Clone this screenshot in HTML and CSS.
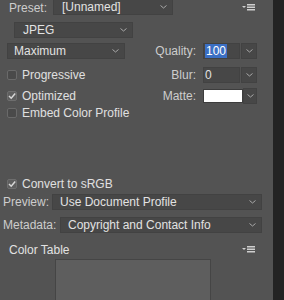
FILE: index.html
```html
<!DOCTYPE html>
<html lang="en">
<head>
    <meta charset="UTF-8">
    <title>Save for Web - Optimize</title>
    <link rel="stylesheet" href="styles.css">
</head>
<body>

    <div class="panel">

        <!-- Preset -->
        <div class="row preset-row">
            <span class="label preset-label">Preset:</span>
            <div class="select preset-select">
                <span>[Unnamed]</span>
                <svg class="chev" width="7" height="4" viewBox="0 0 7 4"><path d="M0.5 0.5 L3.5 3 L6.5 0.5" fill="none" stroke="#a8a8a8" stroke-width="1"/></svg>
            </div>
            <span class="menu-icon">
                <svg width="13" height="8" viewBox="0 0 13 8">
                    <path d="M0 2 L4 2 L2 4 Z" fill="#d0d0d0"/>
                    <rect x="5" y="0" width="8" height="1.5" fill="#cfcfcf"/>
                    <rect x="5" y="2.5" width="8" height="1.5" fill="#cfcfcf"/>
                    <rect x="5" y="5" width="8" height="1.5" fill="#cfcfcf"/>
                </svg>
            </span>
        </div>

        <!-- Format -->
        <div class="row format-row">
            <div class="select format-select">
                <span>JPEG</span>
                <svg class="chev" width="7" height="4" viewBox="0 0 7 4"><path d="M0.5 0.5 L3.5 3 L6.5 0.5" fill="none" stroke="#a8a8a8" stroke-width="1"/></svg>
            </div>
        </div>

        <!-- Options -->
        <div class="row opt-row first">
            <div class="select quality-select">
                <span>Maximum</span>
                <svg class="chev" width="7" height="4" viewBox="0 0 7 4"><path d="M0.5 0.5 L3.5 3 L6.5 0.5" fill="none" stroke="#a8a8a8" stroke-width="1"/></svg>
            </div>
            <div class="field">
                <span class="label">Quality:</span>
                <div class="num"><span class="sel">100</span></div>
                <div class="drop"><svg width="7" height="4" viewBox="0 0 7 4"><path d="M0.5 0.5 L3.5 3 L6.5 0.5" fill="none" stroke="#a8a8a8" stroke-width="1"/></svg></div>
            </div>
        </div>

        <div class="row opt-row blur-row">
            <label class="check"><span class="box"></span>Progressive</label>
            <div class="field">
                <span class="label">Blur:</span>
                <div class="num">0</div>
                <div class="drop"><svg width="7" height="4" viewBox="0 0 7 4"><path d="M0.5 0.5 L3.5 3 L6.5 0.5" fill="none" stroke="#a8a8a8" stroke-width="1"/></svg></div>
            </div>
        </div>

        <div class="row opt-row matte-row">
            <label class="check"><span class="box checked"><svg width="10" height="10" viewBox="0 0 10 10"><path d="M2 5 L4.2 7.2 L8.2 2.6" fill="none" stroke="#d8d8d8" stroke-width="1.5"/></svg></span>Optimized</label>
            <div class="field">
                <span class="label">Matte:</span>
                <div class="swatch"></div>
                <div class="drop small"><svg width="7" height="4" viewBox="0 0 7 4"><path d="M0.5 0.5 L3.5 3 L6.5 0.5" fill="none" stroke="#a8a8a8" stroke-width="1"/></svg></div>
            </div>
        </div>

        <div class="row opt-row short">
            <label class="check"><span class="box"></span>Embed Color Profile</label>
        </div>

        <!-- Color settings -->
        <div class="row srgb-row">
            <label class="check"><span class="box checked"><svg width="10" height="10" viewBox="0 0 10 10"><path d="M2 5 L4.2 7.2 L8.2 2.6" fill="none" stroke="#d8d8d8" stroke-width="1.5"/></svg></span>Convert to sRGB</label>
        </div>

        <div class="row wide-row preview-row">
            <span class="label side-label">Preview:</span>
            <div class="select grow">
                <span>Use Document Profile</span>
                <svg class="chev" width="7" height="4" viewBox="0 0 7 4"><path d="M0.5 0.5 L3.5 3 L6.5 0.5" fill="none" stroke="#a8a8a8" stroke-width="1"/></svg>
            </div>
        </div>

        <div class="row wide-row meta-row">
            <span class="label side-label">Metadata:</span>
            <div class="select grow">
                <span>Copyright and Contact Info</span>
                <svg class="chev" width="7" height="4" viewBox="0 0 7 4"><path d="M0.5 0.5 L3.5 3 L6.5 0.5" fill="none" stroke="#a8a8a8" stroke-width="1"/></svg>
            </div>
        </div>

        <!-- Color Table -->
        <div class="row table-head">
            <span class="title">Color Table</span>
            <span class="menu-icon">
                <svg width="13" height="8" viewBox="0 0 13 8">
                    <path d="M0 2 L4 2 L2 4 Z" fill="#d0d0d0"/>
                    <rect x="5" y="0" width="8" height="1.5" fill="#cfcfcf"/>
                    <rect x="5" y="2.5" width="8" height="1.5" fill="#cfcfcf"/>
                    <rect x="5" y="5" width="8" height="1.5" fill="#cfcfcf"/>
                </svg>
            </span>
        </div>
        <div class="color-table"></div>

    </div>
    <div class="edge"></div>

</body>
</html>
```

FILE: styles.css
```css
/* Basic Reset */
* { margin: 0; padding: 0; box-sizing: border-box; }

body {
    width: 284px;
    height: 300px;
    overflow: hidden;
    display: flex;
    font-family: "Liberation Sans", Arial, sans-serif;
    font-size: 12px;
    color: #dedede;
    background-color: #535353;
}

.panel {
    width: 273px;
    height: 300px;
    overflow: hidden;
    background-color: #535353;
}
.edge {
    width: 11px;
    height: 300px;
    background-color: #232323;
}

/* Rows */
.row {
    display: flex;
    align-items: center;
}
.label {
    color: #cdcdcd;
}

/* Dropdowns */
.select {
    display: flex;
    align-items: center;
    justify-content: space-between;
    height: 16px;
    padding: 0 5px 0 7px;
    background-color: #474747;
    border: 1px solid #424242;
    color: #e2e2e2;
}
.select span {
    line-height: 14px;
}

/* Preset */
.preset-row {
    height: 15px;
}
.preset-label {
    width: 53px;
    padding-left: 9px;
}
.preset-select {
    width: 120px;
    height: 16px;
    margin-top: -2px;
    padding-left: 8px;
}
.menu-icon {
    display: flex;
    margin-left: auto;
    margin-right: 18px;
}

.format-row {
    margin-top: 7px;
    padding-left: 14px;
}
.format-select {
    width: 119px;
    padding-left: 8px;
}

/* Options */
.opt-row {
    justify-content: space-between;
    padding: 0 16px 0 7px;
    height: 16px;
}
.opt-row.first {
    margin-top: 5px;
}
.opt-row.blur-row {
    margin-top: 8px;
}
.opt-row.matte-row {
    margin-top: 5px;
}
.opt-row.short {
    margin-top: 1px;
}
.quality-select {
    width: 118px;
    padding-left: 6px;
}
.field {
    display: flex;
    align-items: center;
}
.field .label {
    margin-right: 7px;
}
.num {
    width: 37px;
    height: 16px;
    padding-left: 1px;
    background-color: #474747;
    border: 1px solid #424242;
    line-height: 14px;
    color: #e2e2e2;
}
.num .sel {
    background-color: #3b6fc4;
    color: #ffffff;
    padding: 0 1px;
}
.drop {
    display: flex;
    align-items: center;
    justify-content: center;
    width: 16px;
    height: 16px;
    margin-left: 1px;
    background-color: #474747;
    border: 1px solid #424242;
}
.drop.small {
    width: 14px;
    margin-left: 0;
}
.swatch {
    width: 40px;
    height: 14px;
    background-color: #ffffff;
    border: 1px solid #3d3d3d;
}

/* Checkboxes */
.check {
    display: flex;
    align-items: center;
    color: #e0e0e0;
}
.box {
    display: flex;
    flex: none;
    width: 10px;
    height: 10px;
    margin-right: 5px;
    border: 1px solid #6a6a6a;
    border-radius: 2px;
    background-color: #4a4a4a;
}
.box.checked {
    background-color: #5e5e5e;
    border-color: #6e6e6e;
}
.box svg {
    margin: -1px;
}

/* Color settings */
.srgb-row {
    margin-top: 56px;
    padding-left: 7px;
    height: 14px;
}
.wide-row {
    padding: 0 11px 0 3px;
    height: 16px;
}
.preview-row {
    margin-top: 3px;
}
.meta-row {
    margin-top: 7px;
}
.side-label {
    flex: none;
}
.preview-row .side-label {
    width: 49px;
}
.meta-row .side-label {
    width: 57px;
}
.grow {
    flex: 1;
    height: 16px;
    padding-left: 7px;
}

/* Color Table */
.table-head {
    margin-top: 10px;
    padding-left: 9px;
    height: 14px;
}
.title {
    font-size: 12px;
    color: #e2e2e2;
}
.color-table {
    width: 156px;
    height: 60px;
    margin: 2px 0 0 55px;
    background-color: #5e5e5e;
    border: 1px solid #454545;
}
```
